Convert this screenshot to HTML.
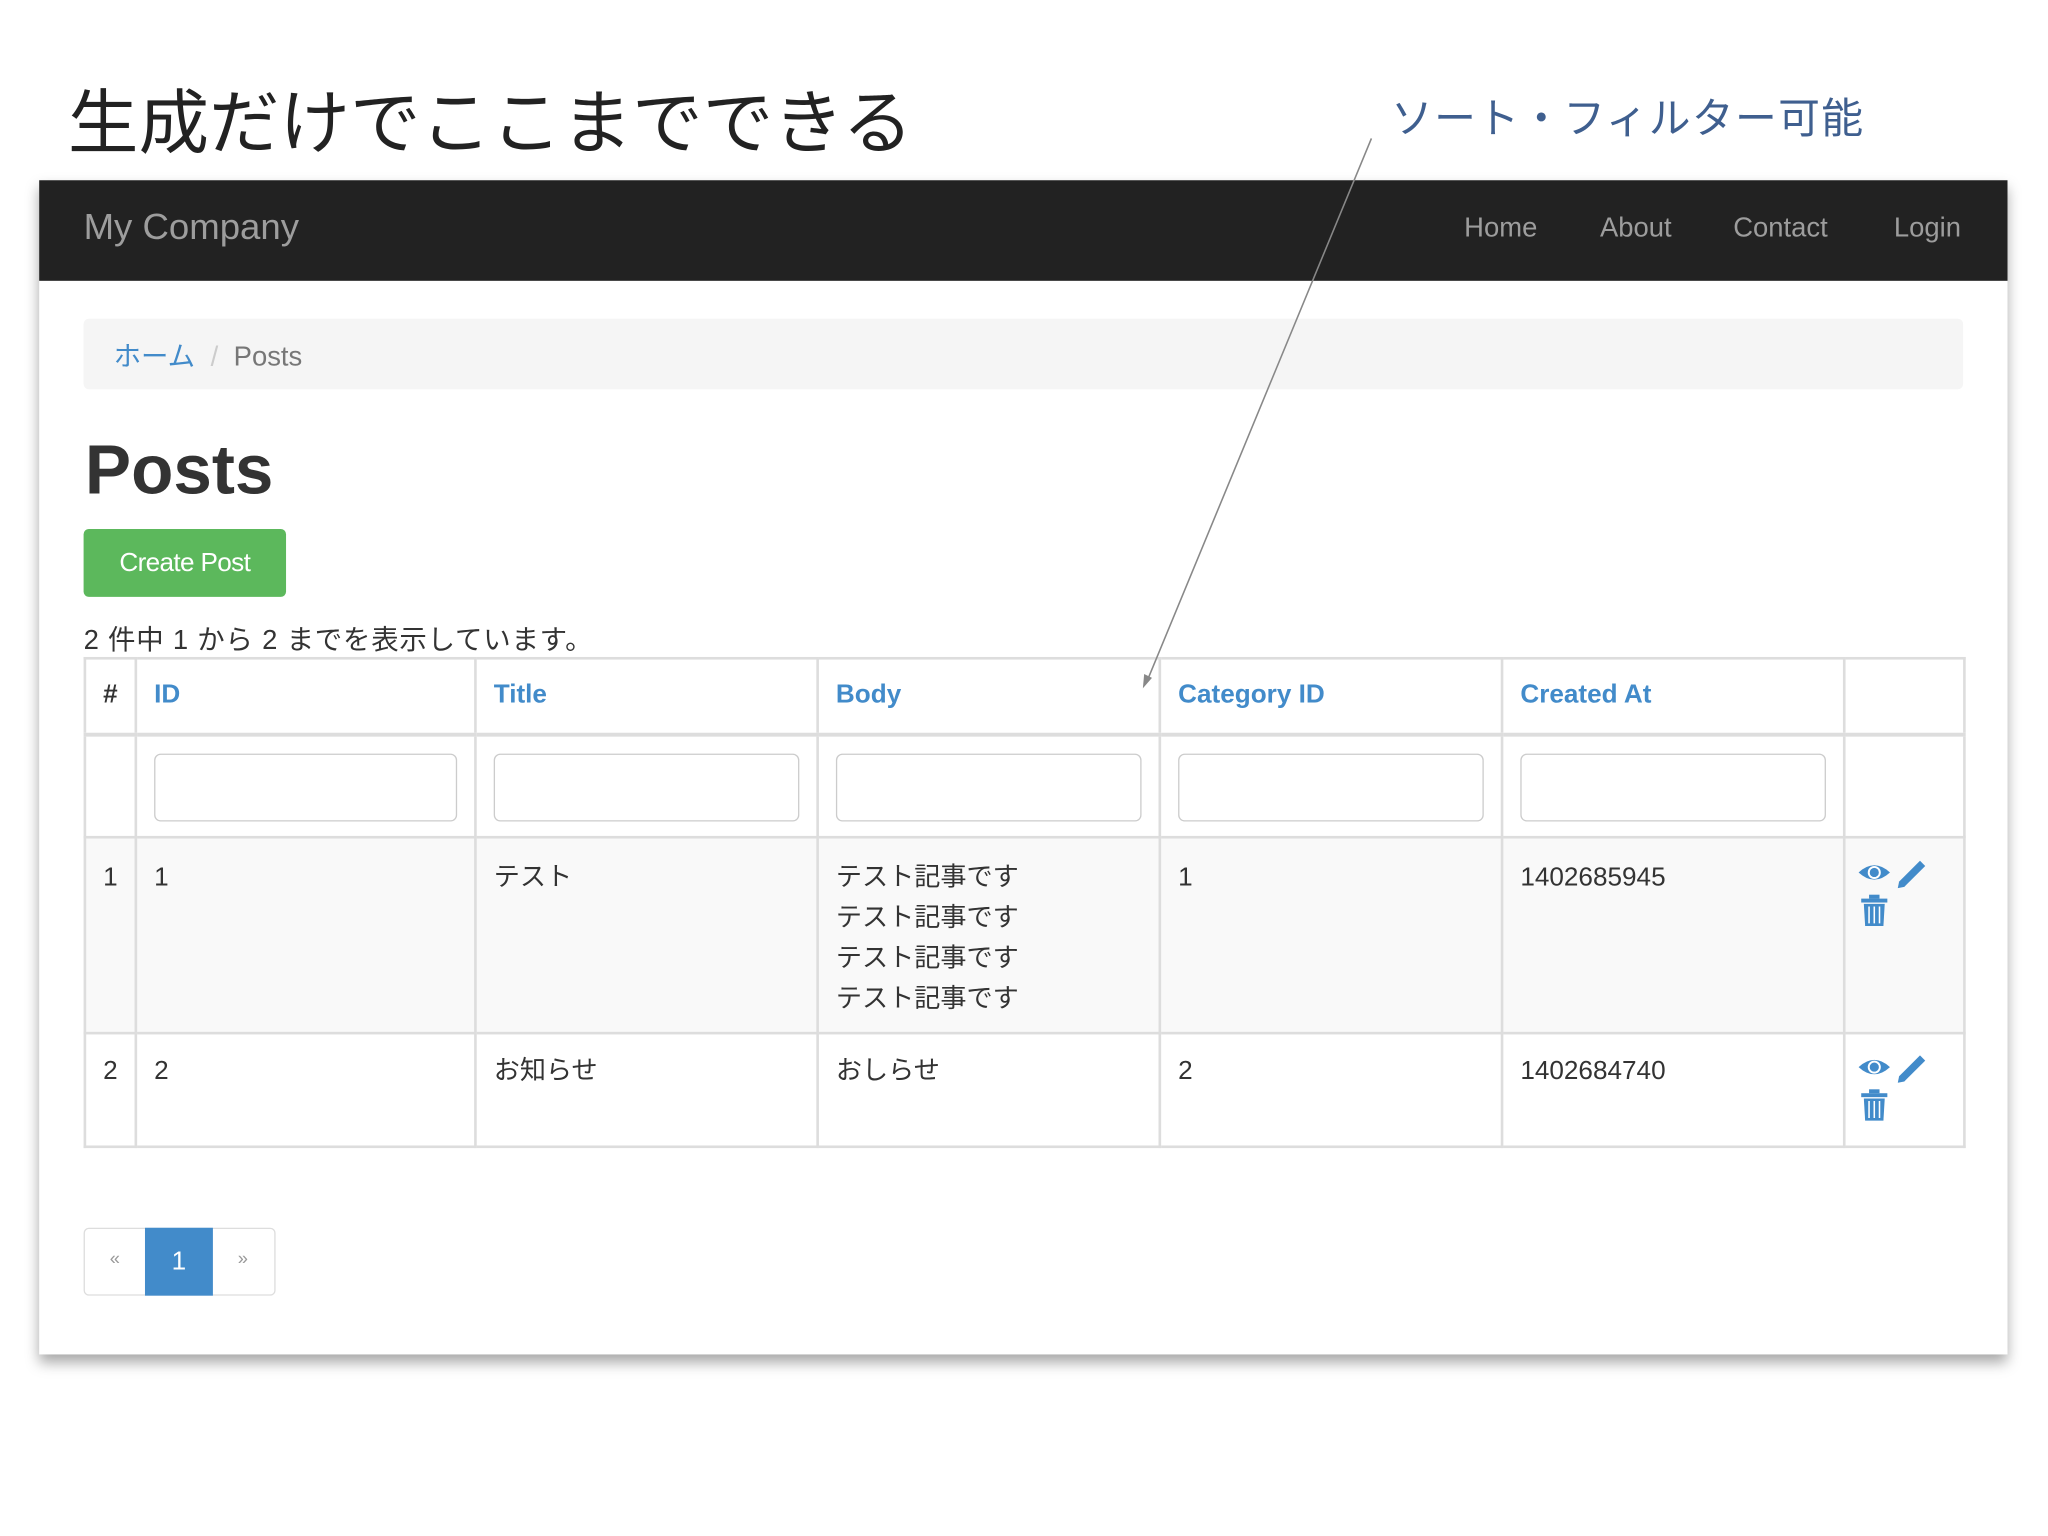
<!DOCTYPE html>
<html><head><meta charset="utf-8"><style>
html,body{margin:0;padding:0;background:#fff;width:2048px;height:1536px;overflow:hidden}
#w{position:absolute;left:0;top:0;width:1568px;height:1176px;transform:scale(1.30612);transform-origin:0 0;font-family:"Liberation Sans","Noto Sans CJK JP",sans-serif;color:#333}
.a{position:absolute;white-space:nowrap}
#panel{position:absolute;left:30px;top:138px;width:1507px;height:899px;background:#fff;box-shadow:0 6px 10px rgba(0,0,0,.35)}
#nav{position:absolute;left:30px;top:138px;width:1507px;height:77px;background:#222}
.nl{color:#9d9d9d;font-size:21px;top:163px}
table{position:absolute;left:64px;top:503px;border-collapse:collapse;font-size:20px;table-layout:fixed;width:1439px}
td{border:2px solid #ddd;padding:0 13px;vertical-align:top;box-sizing:border-box}
th{border:2px solid #ddd;border-bottom-width:3px;text-align:left;padding:0 13px;color:#428bca;font-weight:bold;box-sizing:border-box;height:58px}
.inp{width:100%;height:52px;border:1.5px solid #ccc;border-radius:5px;box-sizing:border-box;margin-top:13px}
.g{background:#f9f9f9}
</style></head><body><div id="w">
<div class="a" style="left:52px;top:50px;font-size:54px;color:#222">生成だけでここまでできる</div>
<div id="panel"></div>
<div id="nav"></div>
<div class="a" style="left:64px;top:158px;font-size:28px;color:#9d9d9d">My Company</div>
<div class="a nl" style="left:1121px">Home</div>
<div class="a nl" style="left:1225px">About</div>
<div class="a nl" style="left:1327px">Contact</div>
<div class="a nl" style="left:1450px">Login</div>
<div class="a" style="left:64px;top:244px;width:1439px;height:54px;background:#f5f5f5;border-radius:4px"></div>
<div class="a" style="left:87px;top:257px;font-size:21px;color:#428bca">ホーム <span style="color:#ccc;padding:0 6px">/</span> <span style="color:#777">Posts</span></div>
<div class="a" style="left:65px;top:330px;font-size:53px;font-weight:bold;color:#333">Posts</div>
<div class="a" style="left:64px;top:405px;width:155px;height:52px;background:#5cb85c;border-radius:4px;color:#fff;font-size:20px;line-height:52px;text-align:center;letter-spacing:-.5px">Create Post</div>
<div class="a" style="left:64px;top:474px;font-size:21px;letter-spacing:.6px">2 件中 1 から 2 までを表示しています。</div>
<table>
<colgroup><col style="width:39px"><col style="width:260px"><col style="width:262px"><col style="width:262px"><col style="width:262px"><col style="width:262px"><col style="width:92px"></colgroup>
<tr><th style="color:#333">#</th><th>ID</th><th>Title</th><th>Body</th><th>Category ID</th><th>Created At</th><th></th></tr>
<tr style="height:79px"><td></td><td><div class="inp"></div></td><td><div class="inp"></div></td><td><div class="inp"></div></td><td><div class="inp"></div></td><td><div class="inp"></div></td><td></td></tr>
<tr class="g" style="height:150px;line-height:31px"><td style="padding-top:15px">1</td><td style="padding-top:15px">1</td><td style="padding-top:15px">テスト</td><td style="padding-top:15px">テスト記事です<br>テスト記事です<br>テスト記事です<br>テスト記事です</td><td style="padding-top:15px">1</td><td style="padding-top:15px">1402685945</td><td></td></tr>
<tr style="height:87px;line-height:31px"><td style="padding-top:13px">2</td><td style="padding-top:13px">2</td><td style="padding-top:13px">お知らせ</td><td style="padding-top:13px">おしらせ</td><td style="padding-top:13px">2</td><td style="padding-top:13px">1402684740</td><td></td></tr>
</table>
<svg class="a" style="left:1420px;top:655px" width="60" height="60" viewBox="0 0 60 60"><g fill="#428bca"><path d="M3 13 Q15 2 27 13 Q15 24 3 13Z"/><circle cx="15" cy="13" r="5" fill="#fff"/><circle cx="15" cy="13" r="3.5"/><path d="M34 20 L50 4 L54 8 L38 24 L33 25Z"/><rect x="5" y="33" width="20" height="3"/><rect x="11" y="30" width="8" height="3"/><path d="M7 37 H23 L22 54 H8Z"/></g><g stroke="#fff" stroke-width="1.2"><line x1="11" y1="39" x2="11" y2="52"/><line x1="15" y1="39" x2="15" y2="52"/><line x1="19" y1="39" x2="19" y2="52"/></g></svg>
<svg class="a" style="left:1420px;top:804px" width="60" height="60" viewBox="0 0 60 60"><g fill="#428bca"><path d="M3 13 Q15 2 27 13 Q15 24 3 13Z"/><circle cx="15" cy="13" r="5" fill="#fff"/><circle cx="15" cy="13" r="3.5"/><path d="M34 20 L50 4 L54 8 L38 24 L33 25Z"/><rect x="5" y="33" width="20" height="3"/><rect x="11" y="30" width="8" height="3"/><path d="M7 37 H23 L22 54 H8Z"/></g><g stroke="#fff" stroke-width="1.2"><line x1="11" y1="39" x2="11" y2="52"/><line x1="15" y1="39" x2="15" y2="52"/><line x1="19" y1="39" x2="19" y2="52"/></g></svg>
<div class="a" style="left:64px;top:940px;width:145px;height:50px;border:1px solid #ddd;border-radius:4px"></div>
<div class="a" style="left:111px;top:940px;width:52px;height:52px;background:#428bca;color:#fff;font-size:20px;line-height:52px;text-align:center">1</div>
<div class="a" style="left:84px;top:955px;font-size:14px;color:#999">«</div>
<div class="a" style="left:182px;top:955px;font-size:14px;color:#999">»</div>
<div class="a" style="left:1065px;top:66px;font-size:32px;color:#3f5f8f;letter-spacing:1px">ソート・フィルター可能</div>
<svg class="a" style="left:0;top:0" width="1568" height="1176"><line x1="1050" y1="106" x2="878" y2="522" stroke="#888" stroke-width="1.2"/><path d="M875 527 L876 516 L882 519Z" fill="#888"/></svg>
</div></body></html>
